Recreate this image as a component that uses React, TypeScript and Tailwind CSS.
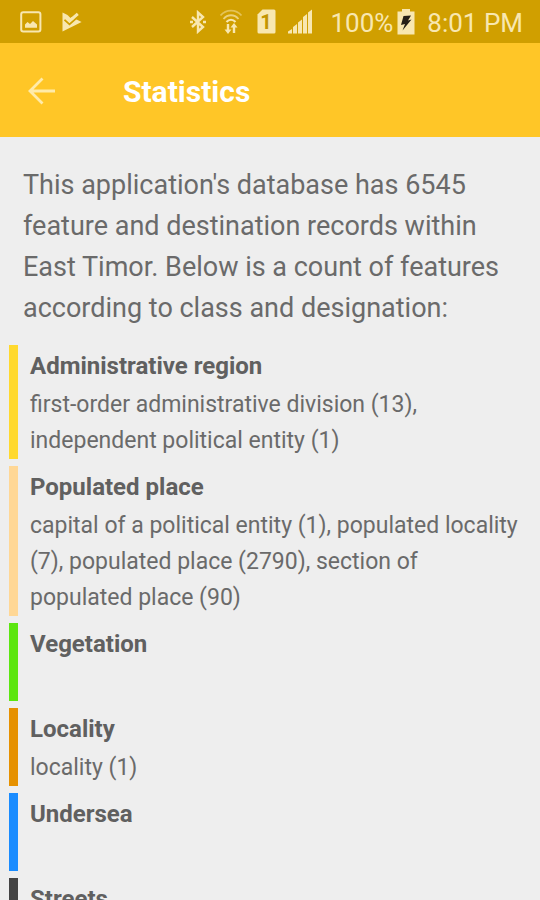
const features = [
  {
    name: "Administrative region",
    color: "bg-[#ffd92e]",
    details:
      "first-order administrative division (13), independent political entity (1)",
  },
  {
    name: "Populated place",
    color: "bg-[#ffd795]",
    details:
      "capital of a political entity (1), populated locality (7), populated place (2790), section of populated place (90)",
  },
  { name: "Vegetation", color: "bg-[#5ce610]", details: "" },
  { name: "Locality", color: "bg-[#e69100]", details: "locality (1)" },
  { name: "Undersea", color: "bg-[#1a8cff]", details: "" },
  { name: "Streets", color: "bg-[#444444]", details: "" },
];

const StatusBar = () => {
  return (
    <div className="flex h-[43px] shrink-0 items-center justify-between bg-[#d09f00] pr-[17px] pl-5 text-[#f8e7b0]">
      <div className="flex items-center gap-5">
        <svg width="22" height="22" viewBox="0 0 22 22" fill="none">
          <rect
            x="1.2"
            y="1.2"
            width="19.2"
            height="19.4"
            rx="2"
            stroke="currentColor"
            strokeWidth="2"
          />
          <path
            d="M5 16.8v-3.3l2.5-2.5 2.500 2 3-3 4 3.500v3.300z"
            fill="currentColor"
          />
        </svg>
        <svg width="20" height="20" viewBox="0 0 20 20" fill="none">
          <path d="M0.500 0.500 19.600 10 0.500 19.600z" fill="currentColor" />
          <path
            d="M2.500 7.800 7.500 12.200 14.500 6"
            stroke="#d09f00"
            strokeWidth="1.800"
          />
          <path d="M5.500 3 8.500 6 11.500 4z" fill="#d09f00" />
          <path
            d="M3.500 5.200 7.500 9 15.800 1.800"
            stroke="currentColor"
            strokeWidth="3"
          />
        </svg>
      </div>
      <div className="flex items-center">
        <svg
          className="mr-3"
          width="18"
          height="24"
          viewBox="0 0 18 24"
          fill="none"
          stroke="currentColor"
          strokeWidth="2.400"
        >
          <path d="M3 7l11 10-5 4.500V2.500L14 7 3 17" />
          <path d="M1 12h3M14 12h3" />
        </svg>
        <svg
          className="mr-3.5"
          width="24"
          height="26"
          viewBox="0 0 24 26"
          fill="none"
          stroke="currentColor"
        >
          <path d="M1.500 6.500C7 0 17 0 22.500 6.500" strokeWidth="1.800" opacity=".5" />
          <path d="M4.500 10C8.500 5 15.500 5 19.500 10" strokeWidth="1.800" opacity=".7" />
          <path d="M7.500 13C10 10 14 10 16.500 13" strokeWidth="2" />
          <path d="M9 15v7M15 24v-7" strokeWidth="2.400" />
          <path
            d="M5.500 20.500h7L9 25zM11.500 18.500h7L15 14z"
            fill="currentColor"
            stroke="none"
          />
        </svg>
        <svg className="mr-3" width="19" height="25" viewBox="0 0 19 25">
          <path
            d="M5.500 0.500H17a1.500 1.500 0 0 1 1.500 1.500v21a1.500 1.500 0 0 1-1.500 1.500H2A1.500 1.500 0 0 1 .5 23V5.500z"
            fill="currentColor"
          />
          <text
            x="9"
            y="20"
            textAnchor="middle"
            fontFamily="Roboto, sans-serif"
            fontSize="20"
            fontWeight="700"
            fill="#c29400"
          >
            1
          </text>
        </svg>
        <svg
          className="mr-4.5"
          width="24"
          height="25"
          viewBox="0 0 24 25"
          fill="currentColor"
        >
          <path d="M0 24.500v-2l4-2.500v4.500zM5 24.500V18l4-3v9.500zM10 24.500v-11l4-3v14zM15 24.500V8l4-3v19.500zM20 24.500V3.500l4-3v24z" />
        </svg>
        <span className="pt-0.5 text-[26px] leading-8">100%</span>
        <svg className="mr-3 ml-1" width="18" height="26" viewBox="0 0 18 26">
          <path d="M5 0h8v2.500h4.500V25.500H.5V2.500H5z" fill="currentColor" />
          <path d="M6.500 7 14 6.500 11 11.500 14.500 10.500 5.500 21.500 8 15 4 16z" fill="#252016" />
        </svg>
        <span className="pt-0.5 text-[26px] leading-8">8:01 PM</span>
      </div>
    </div>
  );
};

const Header = () => {
  return (
    <header className="flex h-[94px] shrink-0 items-center bg-[#ffc627] px-7 pt-0.5">
      <button aria-label="Back" className="mr-17 text-[#ffebaa]">
        <svg
          width="27"
          height="28"
          viewBox="0 0 27 28"
          fill="none"
          stroke="currentColor"
          strokeWidth="2.800"
        >
          <path d="M27 14H2M14.500 1.500 2 14l12.500 12.500" />
        </svg>
      </button>
      <h1 className="text-[30px] font-bold text-white">Statistics</h1>
    </header>
  );
};

export default function App() {
  return (
    <div className="flex h-screen flex-col bg-[#eeeeee] font-[Roboto,sans-serif] text-[#6a6a6a]">
      <StatusBar />
      <Header />
      <main className="flex-1 overflow-y-auto [scrollbar-width:none]">
        <p className="px-[23px] pt-7 pb-4 text-[27px] leading-[41px]">
          This application's database has 6545 feature and destination records
          within East Timor. Below is a count of features according to class and
          designation:
        </p>
        <ul className="flex flex-col gap-[7px] pr-4 pl-[9px]">
          {features.map((feature) => (
            <li key={feature.name} className="flex gap-3">
              <div className={`w-[9px] shrink-0 ${feature.color}`} />
              <div>
                <h2 className="text-[24px] leading-[42px] font-bold text-[#606060]">
                  {feature.name}
                </h2>
                <p className="min-h-9 text-[23px] leading-9">
                  {feature.details}
                </p>
              </div>
            </li>
          ))}
        </ul>
      </main>
    </div>
  );
}
